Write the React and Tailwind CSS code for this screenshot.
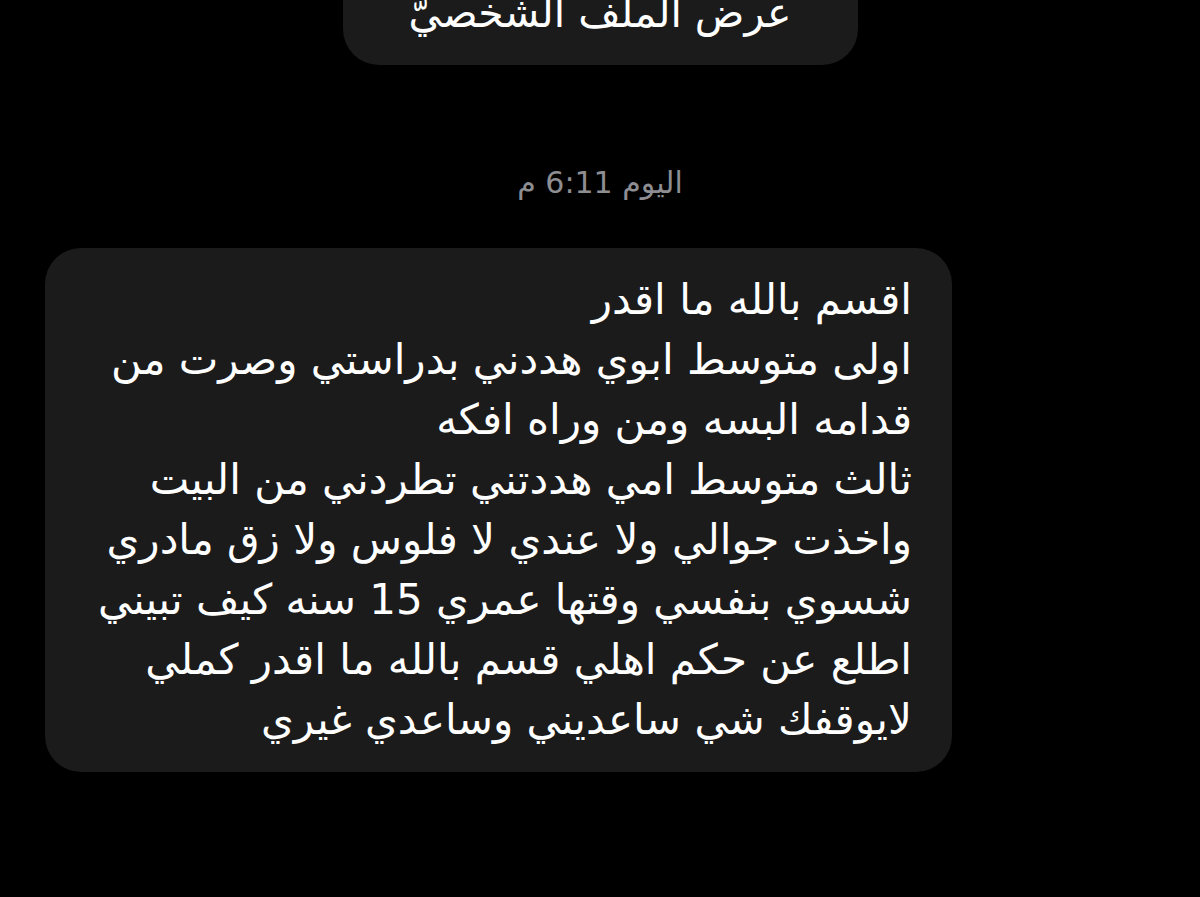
const lines = [
  'اقسم بالله ما اقدر',
  'اولى متوسط ابوي هددني بدراستي وصرت من',
  'قدامه البسه ومن وراه افكه',
  'ثالث متوسط امي هددتني تطردني من البيت',
  'واخذت جوالي ولا عندي لا فلوس ولا زق مادري',
  'شسوي بنفسي وقتها عمري 15 سنه كيف تبيني',
  'اطلع عن حكم اهلي قسم بالله ما اقدر كملي',
  'لايوقفك شي ساعديني وساعدي غيري',
];

export default function App() {
  return (
    <div
      className="w-[1200px] h-[897px] bg-black overflow-hidden flex flex-col items-center"
      style={{ fontFamily: '"DejaVu Sans", "Noto Sans", sans-serif' }}
    >
      {/* زر الملف الشخصي، مقصوص من الأعلى */}
      <div dir="rtl" className="w-[515px] h-[105px] -mt-[40px] shrink-0 bg-[#1b1b1b] rounded-[36px] flex items-start justify-center pt-[30px]">
        <span className="text-white text-[41px] leading-[46px] whitespace-nowrap">عرض الملف الشخصيّ</span>
      </div>

      <div dir="rtl" className="mt-[100px] text-[#8d8d92] text-[30px] leading-[36px] whitespace-nowrap">
        <span>اليوم </span><span dir="ltr">6:11</span><span> م</span>
      </div>

      <div className="w-full pl-[45px] mt-[47px] flex justify-start">
        <div dir="rtl" className="w-[907px] bg-[#1b1b1b] rounded-[36px] pr-[40px] py-[22px] text-white text-[42px] leading-[60px]">
          {lines.map((l, i) => (
            <div key={i} className="whitespace-nowrap">{l}</div>
          ))}
        </div>
      </div>
    </div>
  );
}
